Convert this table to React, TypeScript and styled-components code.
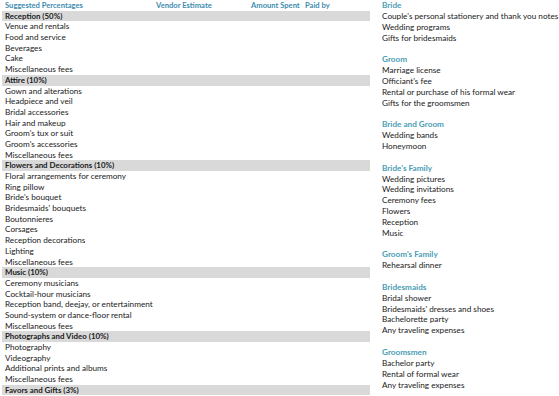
import React from "react";
import styled, { createGlobalStyle } from "styled-components";

const Global = createGlobalStyle`
  html, body { margin: 0; padding: 0; background: #ffffff; }
  body { font-family: Lato, "Open Sans", sans-serif; color: #1a1a1a; }
`;

const Page = styled.div`
  width: 559px;
  height: 396px;
  overflow: hidden;
  display: flex;
  align-items: flex-start;
`;

const LeftTable = styled.div`
  width: 368px;
  margin-left: 2px;
  display: flex;
  flex-direction: column;
`;

const Row = styled.div<{ $band?: boolean; $head?: boolean }>`
  height: 10.7px;
  line-height: 10.7px;
  display: grid;
  grid-template-columns: 151px 95px 54px 1fr;
  padding-left: 3px;
  font-size: ${(p) => (p.$head ? "7.6px" : p.$band ? "7.9px" : "8.2px")};
  white-space: nowrap;
  background: ${(p) => (p.$band ? "#d9d9d9" : "transparent")};
  font-weight: ${(p) => (p.$band || p.$head ? 700 : 400)};
  color: ${(p) => (p.$head ? "#3d8cb0" : "#1a1a1a")};
`;

const Cell = styled.span``;

const RightCol = styled.div`
  margin-left: 12px;
  display: flex;
  flex-direction: column;
`;

const Group = styled.div`
  display: flex;
  flex-direction: column;
  margin-bottom: 10.85px;
`;

const GroupTitle = styled.div`
  height: 10.85px;
  line-height: 10.85px;
  font-size: 8.2px;
  font-weight: 700;
  color: #4a9db5;
  white-space: nowrap;
`;

const Item = styled.div`
  height: 10.85px;
  line-height: 10.85px;
  font-size: 8.2px;
  color: #1a1a1a;
  white-space: nowrap;
`;

type Sec = { title: string; items: string[] };

const sections: Sec[] = [
  { title: "Reception (50%)", items: ["Venue and rentals", "Food and service", "Beverages", "Cake", "Miscellaneous fees"] },
  { title: "Attire (10%)", items: ["Gown and alterations", "Headpiece and veil", "Bridal accessories", "Hair and makeup", "Groom's tux or suit", "Groom's accessories", "Miscellaneous fees"] },
  { title: "Flowers and Decorations (10%)", items: ["Floral arrangements for ceremony", "Ring pillow", "Bride's bouquet", "Bridesmaids' bouquets", "Boutonnieres", "Corsages", "Reception decorations", "Lighting", "Miscellaneous fees"] },
  { title: "Music (10%)", items: ["Ceremony musicians", "Cocktail-hour musicians", "Reception band, deejay, or entertainment", "Sound-system or dance-floor rental", "Miscellaneous fees"] },
  { title: "Photographs and Video (10%)", items: ["Photography", "Videography", "Additional prints and albums", "Miscellaneous fees"] },
  { title: "Favors and Gifts (3%)", items: [] },
];

const groups: Sec[] = [
  { title: "Bride", items: ["Couple's personal stationery and thank you notes", "Wedding programs", "Gifts for bridesmaids"] },
  { title: "Groom", items: ["Marriage license", "Officiant's fee", "Rental or purchase of his formal wear", "Gifts for the groomsmen"] },
  { title: "Bride and Groom", items: ["Wedding bands", "Honeymoon"] },
  { title: "Bride's Family", items: ["Wedding pictures", "Wedding invitations", "Ceremony fees", "Flowers", "Reception", "Music"] },
  { title: "Groom's Family", items: ["Rehearsal dinner"] },
  { title: "Bridesmaids", items: ["Bridal shower", "Bridesmaids' dresses and shoes", "Bachelorette party", "Any traveling expenses"] },
  { title: "Groomsmen", items: ["Bachelor party", "Rental of formal wear", "Any traveling expenses"] },
];

export default function App() {
  return (
    <>
      <Global />
      <Page>
        <LeftTable>
          <Row $head>
            <Cell>Suggested Percentages</Cell>
            <Cell>Vendor Estimate</Cell>
            <Cell>Amount Spent</Cell>
            <Cell>Paid by</Cell>
          </Row>
          {sections.map((s) => (
            <React.Fragment key={s.title}>
              <Row $band>
                <Cell>{s.title}</Cell>
              </Row>
              {s.items.map((it, i) => (
                <Row key={i}>
                  <Cell>{it}</Cell>
                </Row>
              ))}
            </React.Fragment>
          ))}
        </LeftTable>
        <RightCol>
          {groups.map((g) => (
            <Group key={g.title}>
              <GroupTitle>{g.title}</GroupTitle>
              {g.items.map((it, i) => (
                <Item key={i}>{it}</Item>
              ))}
            </Group>
          ))}
        </RightCol>
      </Page>
    </>
  );
}
